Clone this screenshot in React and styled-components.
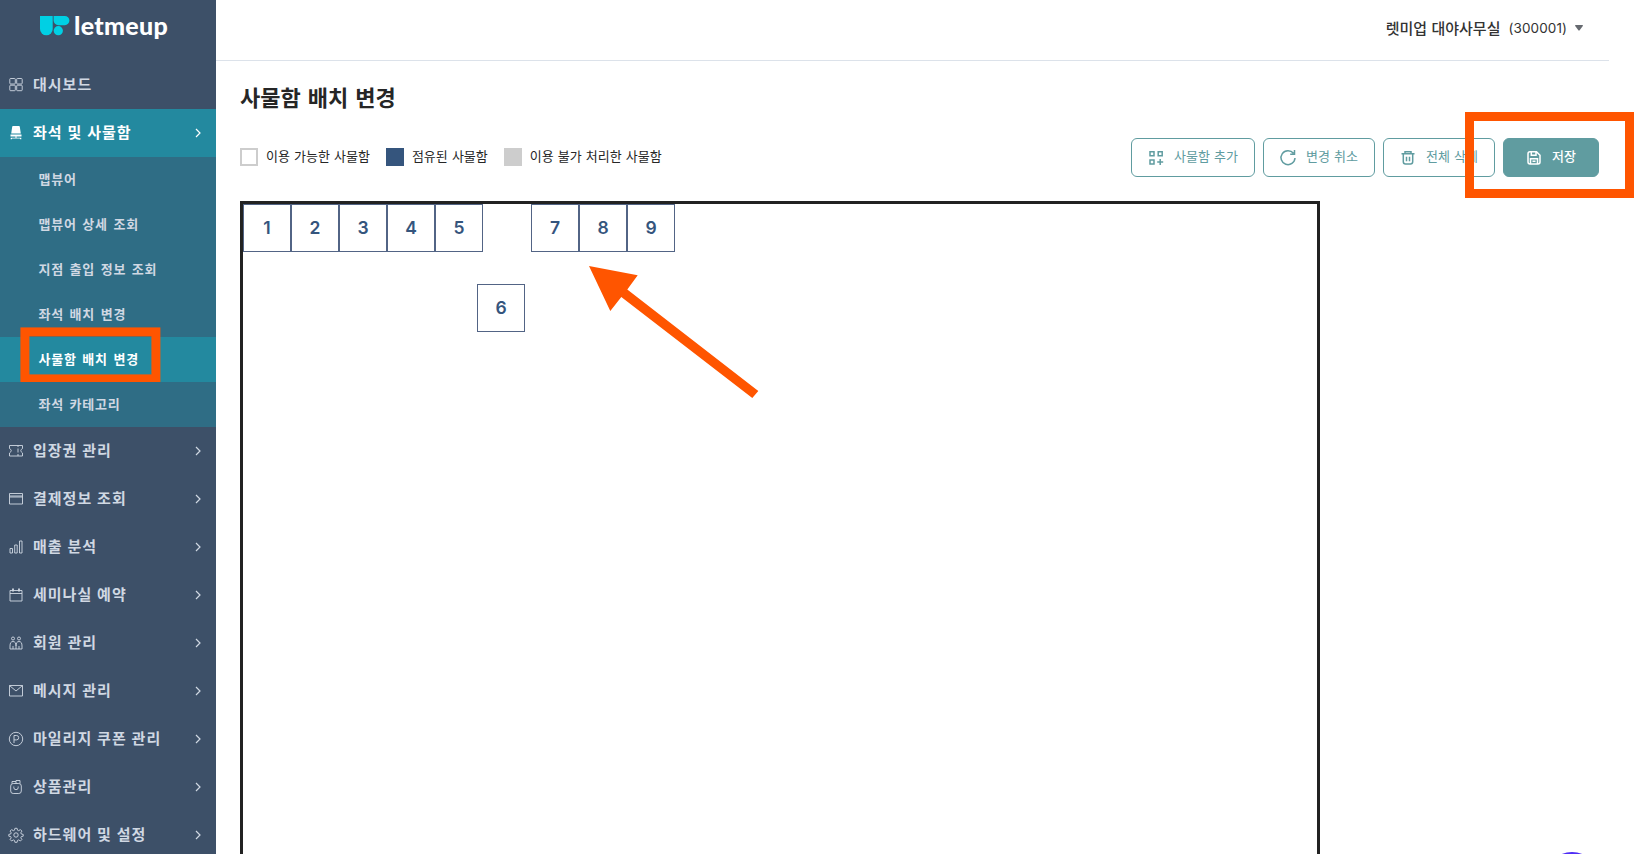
import styled, { createGlobalStyle } from 'styled-components'

export default function App() {
    return <Page>
        <GlobalStyle />
        <Sidebar>
            <Logo>
                <LogoMark />
                <LogoText>letmeup</LogoText>
            </Logo>
            {menuList.map(menu => {
                return <div key={menu.title}>
                    <MenuItem $active={menu.active}>
                        <MenuIcon viewBox='0 0 16 16'>{menu.icon}</MenuIcon>
                        <MenuTitle>{menu.title}</MenuTitle>
                        {menu.arrow && <Chevron viewBox='0 0 8 10'><path d='M2 1l4 4-4 4' /></Chevron>}
                    </MenuItem>
                    {menu.children && menu.children.map(child => {
                        return <SubItem key={child} $active={child === '사물함 배치 변경'}>
                            {child}
                            {child === '사물함 배치 변경' && <MenuHighlight />}
                        </SubItem>
                    })}
                </div>
            })}
        </Sidebar>
        <Main>
            <Header>
                <Branch>렛미업 대야사무실</Branch>
                <BranchCode>(300001)</BranchCode>
                <Caret viewBox='0 0 8 6'><path d='M.6 0h6.8q.8.2.4 1L4.6 5.3q-.6.7-1.2 0L.2 1Q-.2.2.6 0z' /></Caret>
            </Header>
            <Title>사물함 배치 변경</Title>
            <Toolbar>
                <Legend>
                    {legendList.map(item => {
                        return <LegendItem key={item.label}>
                            <Swatch $fill={item.fill} $border={item.border} />
                            <LegendLabel>{item.label}</LegendLabel>
                        </LegendItem>
                    })}
                </Legend>
                <Buttons>
                    {buttonList.map(button => {
                        return <Button key={button.label} $width={button.width} $primary={button.primary}>
                            <ButtonIcon viewBox='0 0 16 16'>{button.icon}</ButtonIcon>
                            <ButtonLabel>{button.label}</ButtonLabel>
                            {button.primary && <SaveHighlight />}
                        </Button>
                    })}
                </Buttons>
            </Toolbar>
            <Board>
                {lockerList.map(locker => {
                    return <Locker key={locker.no} style={{ left: locker.x, top: locker.y }}>{locker.no}</Locker>
                })}
                <Arrow viewBox='0 0 170 133'>
                    <path d='M0 0L48.7 9.3 38.3 23.6 169.3 125 163.3 132 32.3 31 21.3 45z' />
                </Arrow>
            </Board>
        </Main>
        <ChatButton />
    </Page>
}

function LogoMark() {
    return <LogoSvg viewBox='0 0 30 20'>
        <path d='M0 0h12.7v13A6.35 6.35 0 0 1 0 13z' />
        <path d='M13.6 0h11.2a4.6 4.6 0 0 1 0 9.2h-6.4a4.8 4.8 0 0 1-4.8-4.8z' />
        <circle cx='18.3' cy='14.7' r='4.6' />
    </LogoSvg>
}

const menuList = [{
    title: '대시보드',
    icon: <><rect x='1.8' y='1.5' width='5.5' height='5.5' rx='.8' /><rect x='8.7' y='1.5' width='5.5' height='5.5' rx='.8' /><rect x='1.8' y='8.2' width='5.5' height='5.5' rx='.8' /><rect x='8.7' y='8.2' width='5.5' height='5.5' rx='.8' /></>
}, {
    title: '좌석 및 사물함',
    active: true,
    arrow: true,
    icon: <path d='M5 1h6q.7 0 .8.7l1 6.8H3.2l1-6.8Q4.300 1 5 1zM2.500 9.500h11v2h-11zM7.500 11.500h1v1.200h4.800v1.500h-1l-.5-.7H4.200l-.5.7h-1v-1.500h4.800z' fill='currentColor' stroke='none' />,
    children: ['맵뷰어', '맵뷰어 상세 조회', '지점 출입 정보 조회', '좌석 배치 변경', '사물함 배치 변경', '좌석 카테고리']
}, {
    title: '입장권 관리',
    arrow: true,
    icon: <path d='M1.500 2.500h13v3q-3.500 2 0 4.500v3h-13v-3q3.500-2.500 0-4.500zM10 2.500V4M10 5.500v4M10 11v2' />
}, {
    title: '결제정보 조회',
    arrow: true,
    icon: <path d='M1.500 2.500h13v10.500h-13zM1.500 5h13M1.500 6h13' />
}, {
    title: '매출 분석',
    arrow: true,
    icon: <path d='M2 9.500h2.500v4.500H2zM6.700 6h2.500v8H6.700zM11.500 2H14v12h-2.500z' />
}, {
    title: '세미나실 예약',
    arrow: true,
    icon: <><path d='M2 3.500h12V14H2zM2 6.500h12' /><path d='M5 1.500v3M11 1.500v3' strokeWidth='1.8' /></>
}, {
    title: '회원 관리',
    arrow: true,
    icon: <><circle cx='5' cy='3.500' r='1.500' /><circle cx='11' cy='3.500' r='1.500' /><path d='M5 14H2v-3q0-4.500 3-4.500T8 11q0-4.500 3-4.500t3 4.500v3h-3v-3M5 11v3h3v-3M8 14h3' /></>
}, {
    title: '메시지 관리',
    arrow: true,
    icon: <path d='M1.500 2.500h13v10.500h-13zM1.500 2.500L8 8l6.500-5.500' />
}, {
    title: '마일리지 쿠폰 관리',
    arrow: true,
    icon: <><circle cx='8' cy='8' r='6.700' /><path d='M6 12V4.500h2.500a2.200 2.200 0 0 1 0 4.400H6' /></>
}, {
    title: '상품관리',
    arrow: true,
    icon: <><rect x='2.700' y='4.500' width='10.600' height='10' rx='2.500' /><path d='M4 4.500V2.500h4V4.500M8 2.500V1.500h4v3M5.800 7.500v1a2.200 2.200 0 0 0 4.400 0v-1' /></>
}, {
    title: '하드웨어 및 설정',
    arrow: true,
    icon: <><circle cx='8' cy='8' r='2.200' /><path d='M6.900 1.300h2.200l.4 1.900 1.200.5 1.700-1.100 1.500 1.500-1.100 1.700.5 1.200 1.900.4v1.800l-1.900.4-.5 1.200 1.100 1.700-1.500 1.500-1.700-1.100-1.200.5-.4 1.900H6.900l-.4-1.900-1.200-.5-1.700 1.100-1.500-1.500 1.100-1.700-.5-1.200-1.900-.4V7.400l1.900-.4.5-1.200-1.100-1.700 1.500-1.500 1.700 1.100 1.200-.5z' /></>
}]

const legendList = [
    { label: '이용 가능한 사물함', fill: '#fff', border: '#cdcdcd' },
    { label: '점유된 사물함', fill: '#35557d', border: '#35557d' },
    { label: '이용 불가 처리한 사물함', fill: '#cdcdcd', border: '#cdcdcd' }
]

const buttonList = [{
    label: '사물함 추가',
    width: 124,
    icon: <path d='M2 1.700h4v4H2zM10.200 1.700h4v4h-4zM2 9.900h4v4H2zM12.200 9v6M9.200 12h6' />
}, {
    label: '변경 취소',
    width: 112,
    icon: <path d='M13.500 3.300A7 7 0 1 0 15 8M14.500 0v4.200h-4.300' />
}, {
    label: '전체 삭제',
    width: 112,
    icon: <path d='M1.500 3.800h13M5 3.800V1.700h6v2.100M3.300 3.800v8q0 2.200 2.200 2.200h5q2.200 0 2.200-2.200v-8M6.500 6.700v4.500M9.500 6.700v4.500' />
}, {
    label: '저장',
    width: 96,
    primary: true,
    icon: <path d='M4 1.700h6.500L14 5.200V12q0 2-2 2H4q-2 0-2-2V3.700q0-2 2-2zM5.300 1.700v3.500H10V2.500M4.500 14V8.700h7V14M6.500 11.300h3' />
}]

const lockerList = [
    { no: 1, x: 0, y: 0 },
    { no: 2, x: 48, y: 0 },
    { no: 3, x: 96, y: 0 },
    { no: 4, x: 144, y: 0 },
    { no: 5, x: 192, y: 0 },
    { no: 6, x: 234, y: 80 },
    { no: 7, x: 288, y: 0 },
    { no: 8, x: 336, y: 0 },
    { no: 9, x: 384, y: 0 }
]

const GlobalStyle = createGlobalStyle`
    * {
        box-sizing: border-box;
    }
    body {
        margin: 0;
        overflow: hidden;
        background: #fff;
        color: #262626;
        font-family: 'Noto Sans CJK KR', sans-serif;
    }
`;

const Page = styled.div`
    display: flex;
    position: relative;
    height: 854px;
    overflow: hidden;
`;

const Sidebar = styled.nav`
    flex: none;
    width: 216px;
    background: #3d5068;
`;

const Logo = styled.div`
    display: flex;
    align-items: flex-start;
    height: 61px;
    padding: 16px 0 0 40px;
`;

const LogoSvg = styled.svg`
    flex: none;
    width: 30px;
    height: 20px;
    fill: #00d0e4;
`;

const LogoText = styled.span`
    margin: -6px 0 0 4px;
    color: #fff;
    font: 900 25px/31px Lato, sans-serif;
    letter-spacing: 0.3px;
`;

const MenuItem = styled.div`
    display: flex;
    align-items: center;
    height: 48px;
    padding: 0 14px 0 8px;
    background: ${props => props.$active ? '#23899f' : 'transparent'};
    color: ${props => props.$active ? '#fff' : '#d0d8e3'};
`;

const MenuTitle = styled.span`
    padding-bottom: 4px;
    font-size: 15px;
    font-weight: 700;
    letter-spacing: 1px;
    word-spacing: 0.5px;
    white-space: nowrap;
`;

const MenuIcon = styled.svg`
    flex: none;
    width: 16px;
    height: 16px;
    margin-right: 9px;
    fill: none;
    stroke: currentColor;
    stroke-width: 0.9;
`;

const Chevron = styled.svg`
    width: 8px;
    height: 10px;
    margin-left: auto;
    fill: none;
    stroke: currentColor;
    stroke-width: 1.2;
`;

const SubItem = styled.div`
    position: relative;
    height: 45px;
    padding-left: 38.5px;
    background: ${props => props.$active ? '#23899f' : '#2f6d85'};
    color: ${props => props.$active ? '#fff' : '#d0d8e3'};
    font-size: 13px;
    font-weight: 700;
    line-height: 43px;
    letter-spacing: 0.8px;
    word-spacing: 1.8px;
    white-space: nowrap;
`;

const Highlight = styled.i`
    position: absolute;
    border: 9px solid #ff5500;
`;

const MenuHighlight = styled(Highlight)`
    left: 20px;
    top: -10px;
    width: 140px;
    height: 56px;
    transform: translate(0.4px, 0.4px);
`;

const Main = styled.main`
    flex: 1;
    min-width: 0;
    display: flex;
    flex-direction: column;
    padding: 0 26px 0 0;
`;

const Header = styled.header`
    flex: none;
    display: flex;
    align-items: center;
    justify-content: flex-end;
    height: 61px;
    padding: 0 26px 5px 0;
    border-bottom: 1px solid #dce2ea;
    color: #333;
`;

const Branch = styled.span`
    font-size: 15px;
    font-weight: 500;
    word-spacing: 1px;
`;

const BranchCode = styled.span`
    margin: 0 8px;
    font: 400 13.5px Inter, sans-serif;
    letter-spacing: 0.1px;
`;

const Caret = styled.svg`
    width: 8px;
    height: 6px;
    fill: #666a70;
`;

const Title = styled.h1`
    flex: none;
    margin: 19px 0 0 24px;
    font-size: 22px;
    font-weight: 700;
    line-height: 32px;
    word-spacing: 2px;
`;

const Toolbar = styled.div`
    flex: none;
    display: flex;
    align-items: center;
    justify-content: space-between;
    height: 39px;
    margin: 26px 10px 24px 24px;
`;

const Legend = styled.div`
    display: flex;
    gap: 16px;
    margin-top: -1px;
`;

const LegendItem = styled.div`
    display: flex;
    align-items: center;
    font-size: 13px;
    line-height: 18px;
    word-spacing: 1.2px;
`;

const LegendLabel = styled.span`
    padding-bottom: 2px;
`;

const Swatch = styled.span`
    width: 18px;
    height: 18px;
    margin-right: 8px;
    border: 2px solid ${props => props.$border};
    background: ${props => props.$fill};
`;

const Buttons = styled.div`
    display: flex;
    gap: 8px;
`;

const Button = styled.button`
    position: relative;
    display: flex;
    align-items: center;
    justify-content: center;
    gap: 10px;
    width: ${props => props.$width}px;
    height: 39px;
    padding: 0;
    border: 1px solid #609ca0;
    border-radius: 6px;
    background: ${props => props.$primary ? '#609ca0' : '#fff'};
    color: ${props => props.$primary ? '#fff' : '#609ca0'};
    font-family: inherit;
    font-size: 13px;
    font-weight: ${props => props.$primary ? 500 : 400};
    white-space: nowrap;
`;

const ButtonIcon = styled.svg`
    width: 16px;
    height: 16px;
    overflow: visible;
    fill: none;
    stroke: currentColor;
    stroke-width: 1.5;
`;

const ButtonLabel = styled.span`
    padding-bottom: 4px;
    word-spacing: 1.2px;
`;

const SaveHighlight = styled(Highlight)`
    left: -39px;
    top: -27px;
    width: 169px;
    height: 86px;
`;

const Board = styled.section`
    position: relative;
    flex: 1;
    width: 1080px;
    margin-left: 24px;
    border: 3px solid #222;
    border-bottom: 0;
`;

const Locker = styled.div`
    position: absolute;
    display: flex;
    align-items: center;
    justify-content: center;
    width: 48px;
    height: 48px;
    padding-bottom: 1px;
    border: 1px solid #526485;
    color: #35557d;
    font: 600 17.5px Inter, sans-serif;
`;

const Arrow = styled.svg`
    position: absolute;
    left: 346px;
    top: 62px;
    width: 170px;
    height: 133px;
    fill: #ff5500;
`;

const ChatButton = styled.span`
    position: absolute;
    left: 1545px;
    top: 852px;
    width: 54px;
    height: 54px;
    border-radius: 50%;
    background: #4f2df5;
`;
